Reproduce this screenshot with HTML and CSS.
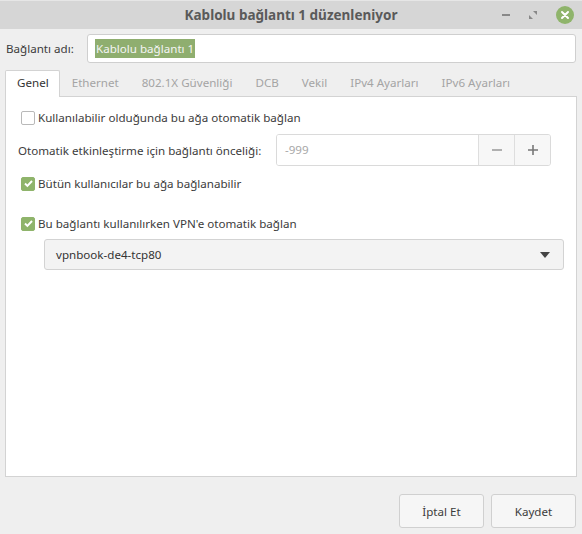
FILE: index.html
```html
<!DOCTYPE html>
<html lang="tr">
<head>
<meta charset="utf-8">
<link rel="stylesheet" href="styles.css">
</head>
<body>
<div class="window">
  <div class="titlebar">
    <div class="tb-spacer"></div>
    <div class="title">Kablolu bağlantı 1 düzenleniyor</div>
    <div class="tb-buttons">
      <span class="tb-min"></span>
      <svg class="tb-max" width="10" height="10" viewBox="0 0 10 10"><path d="M5 1h4v4z M1 5v4h4z" fill="#888"/></svg>
      <span class="tb-close"><svg width="10" height="10" viewBox="0 0 10 10"><path d="M2 2l6 6M8 2l-6 6" stroke="#fff" stroke-width="2" stroke-linecap="round"/></svg></span>
    </div>
  </div>

  <div class="name-row">
    <label class="name-label">Bağlantı adı:</label>
    <div class="name-input"><span class="sel">Kablolu bağlantı 1</span></div>
  </div>

  <div class="tabs">
    <div class="tab active">Genel</div>
    <div class="tab">Ethernet</div>
    <div class="tab">802.1X Güvenliği</div>
    <div class="tab">DCB</div>
    <div class="tab">Vekil</div>
    <div class="tab">IPv4 Ayarları</div>
    <div class="tab">IPv6 Ayarları</div>
  </div>

  <div class="panel">
    <div class="check-row first">
      <span class="cb"></span>
      <span class="cb-label">Kullanılabilir olduğunda bu ağa otomatik bağlan</span>
    </div>
    <div class="prio-row">
      <span class="prio-label">Otomatik etkinleştirme için bağlantı önceliği:</span>
      <div class="spin">
        <span class="spin-val">-999</span>
        <span class="spin-btn"><svg width="12" height="12" viewBox="0 0 12 12"><path d="M1 6h10" stroke="#999" stroke-width="1.6"/></svg></span>
        <span class="spin-btn"><svg width="12" height="12" viewBox="0 0 12 12"><path d="M1 6h10M6 1v10" stroke="#777" stroke-width="1.6"/></svg></span>
      </div>
    </div>
    <div class="check-row">
      <span class="cb checked"><svg width="11" height="11" viewBox="0 0 11 11"><path d="M2 5.5l2.4 2.4L9 3" stroke="#fff" stroke-width="2" fill="none"/></svg></span>
      <span class="cb-label">Bütün kullanıcılar bu ağa bağlanabilir</span>
    </div>
    <div class="check-row vpn">
      <span class="cb checked"><svg width="11" height="11" viewBox="0 0 11 11"><path d="M2 5.5l2.4 2.4L9 3" stroke="#fff" stroke-width="2" fill="none"/></svg></span>
      <span class="cb-label">Bu bağlantı kullanılırken VPN'e otomatik bağlan</span>
    </div>
    <div class="combo">
      <span>vpnbook-de4-tcp80</span>
      <svg width="10" height="6" viewBox="0 0 10 6"><path d="M0 0h10L5 6z" fill="#444"/></svg>
    </div>
  </div>

  <div class="actions">
    <button class="btn">İptal Et</button>
    <button class="btn">Kaydet</button>
  </div>
</div>
</body>
</html>
```
FILE: styles.css
```css
* { box-sizing: border-box; }
html, body { margin: 0; padding: 0; }
body {
  width: 582px;
  height: 534px;
  background: #efefef;
  font-family: "Noto Sans", "DejaVu Sans", sans-serif;
  font-size: 11.6px;
  color: #3c3c3c;
  overflow: hidden;
}
.window { display: flex; flex-direction: column; height: 534px; }

.titlebar {
  height: 29px;
  background: #d6d6d6;
  border-top: 1px solid #e6e6e6;
  display: grid;
  grid-template-columns: 1fr auto 1fr;
  align-items: center;
}
.title {
  font-weight: bold;
  font-size: 13.5px;
  color: #5a5a5a;
}
.tb-buttons {
  display: flex;
  justify-content: flex-end;
  align-items: center;
  gap: 18px;
  padding-right: 8px;
}
.tb-min { width: 8px; height: 2px; background: #888; display: block; }
.tb-max { display: block; }
.tb-close {
  width: 18px; height: 18px; border-radius: 50%;
  background: #8fb46b;
  display: flex; align-items: center; justify-content: center;
}
.tb-close svg { display: block; }

.name-row {
  display: flex;
  align-items: center;
  padding: 3px 6px 0 6px;
  height: 36px;
}
.name-label { width: 81px; color: #3c3c3c; }
.name-input {
  flex: 1;
  height: 29px;
  background: #fff;
  border: 1px solid #cfcfcf;
  border-radius: 3px;
  display: flex;
  align-items: center;
  padding-left: 7px;
}
.sel { background: #8fae6f; color: #f4f4f4; padding: 1px 1px; line-height: 17px; }

.tabs {
  display: flex;
  padding: 5px 0 0 5px;
  height: 32px;
  position: relative;
  z-index: 1;
}
.tab {
  padding: 0 10px 0 11px;
  height: 26px;
  line-height: 24px;
  color: #a4a4a4;
  border: 1px solid transparent;
  border-bottom: none;
}
.tab.active {
  color: #333;
  background: #fff;
  border-color: #d3d3d3;
  border-radius: 2px 2px 0 0;
  height: 27px;
}

.panel {
  margin: -1px 5px 0 5px;
  height: 381px;
  background: #fff;
  border: 1px solid #d3d3d3;
  padding: 12px 13px 0 15px;
}
.check-row { display: flex; align-items: center; height: 17px; }
.cb {
  width: 14px; height: 14px;
  border: 1px solid #b9b9b9;
  border-radius: 2px;
  margin-right: 3px;
  display: flex; align-items: center; justify-content: center;
  background: #fff;
}
.cb.checked { background: #8fb46b; border-color: #8fb46b; }
.cb.checked svg { display: block; }

.prio-row {
  display: flex; align-items: center;
  margin: 8px 0 0 -3px;
  height: 32px;
}
.prio-label { width: 258px; }
.spin {
  width: 275px; height: 32px;
  border: 1px solid #dadada;
  border-radius: 3px;
  display: flex;
  overflow: hidden;
}
.spin-val { flex: 1; color: #a8a8a8; padding-left: 8px; line-height: 30px; background: #fff; }
.spin-btn {
  width: 36px; background: #f7f7f7;
  border-left: 1px solid #dedede;
  display: flex; align-items: center; justify-content: center;
}

.prio-row + .check-row { margin-top: 9px; }
.check-row.vpn { margin-top: 23px; }

.combo {
  margin: 7px 0 0 23px;
  width: 520px;
  height: 31px;
  background: #f3f3f3;
  border: 1px solid #d3d3d3;
  border-radius: 3px;
  display: flex; align-items: center; justify-content: space-between;
  padding: 0 13px 0 11px;
  color: #333;
}

.actions {
  display: flex;
  justify-content: flex-end;
  gap: 7px;
  padding: 17px 6px 0 0;
}
.btn {
  width: 85px; height: 34px;
  font-family: inherit; font-size: 11.6px;
  color: #3c3c3c;
  background: #f6f6f6;
  border: 1px solid #d0d0d0;
  border-radius: 3px;
}
```
